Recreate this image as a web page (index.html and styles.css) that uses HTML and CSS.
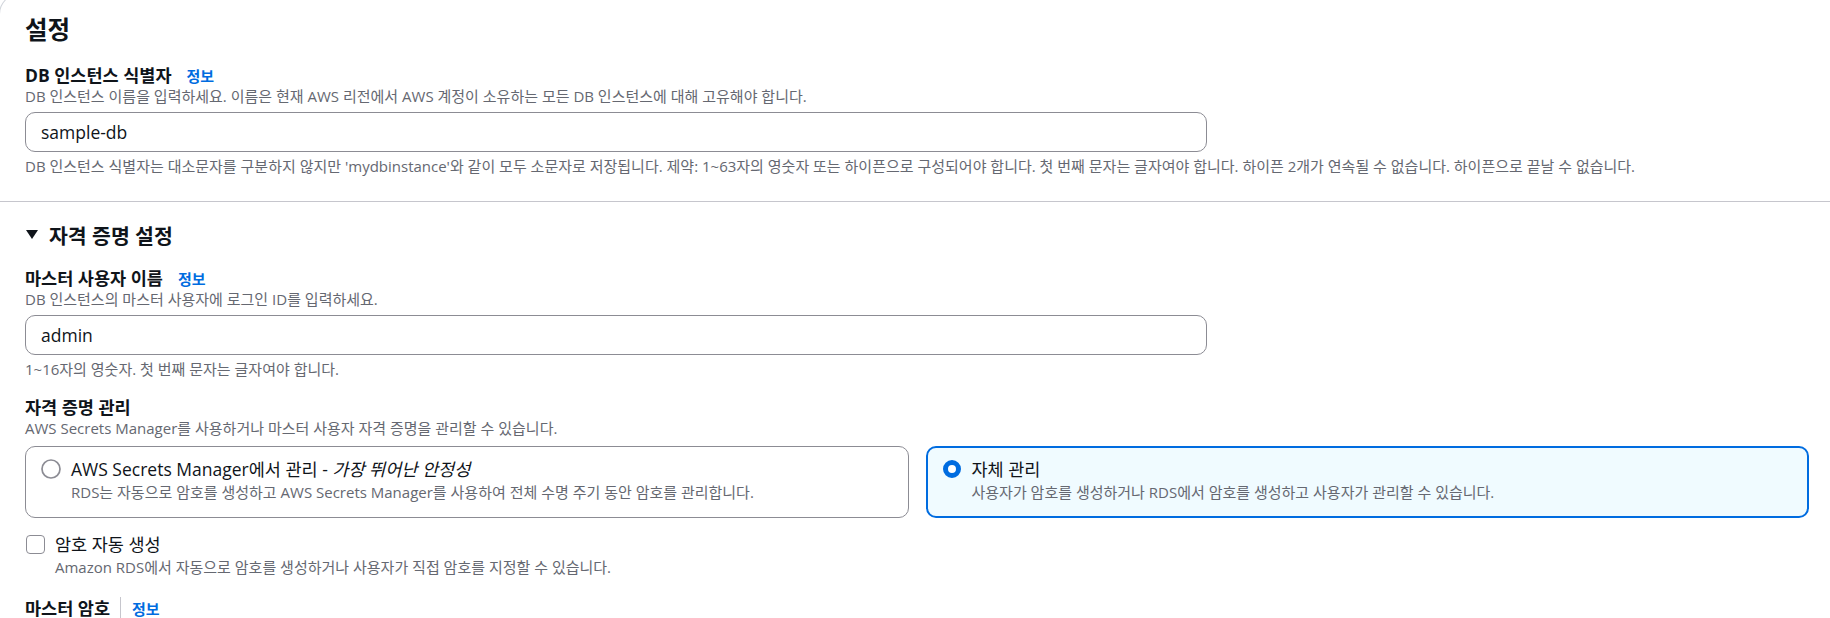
FILE: index.html
```html
<!DOCTYPE html>
<html lang="ko">
<head>
<meta charset="utf-8">
<title>설정</title>
<link rel="stylesheet" href="styles.css">
</head>
<body>
<div class="card">
  <section class="sec sec-top">
    <h2 class="title">설정</h2>
    <div class="field">
      <div class="label-row"><span class="label">DB 인스턴스 식별자</span><a class="info">정보</a></div>
      <div class="desc">DB 인스턴스 이름을 입력하세요. 이름은 현재 AWS 리전에서 AWS 계정이 소유하는 모든 DB 인스턴스에 대해 고유해야 합니다.</div>
      <div class="input">sample-db</div>
      <div class="hint">DB 인스턴스 식별자는 대소문자를 구분하지 않지만 'mydbinstance'와 같이 모두 소문자로 저장됩니다. 제약: 1~63자의 영숫자 또는 하이픈으로 구성되어야 합니다. 첫 번째 문자는 글자여야 합니다. 하이픈 2개가 연속될 수 없습니다. 하이픈으로 끝날 수 없습니다.</div>
    </div>
  </section>
  <section class="sec sec-cred">
    <div class="exp-header">
      <svg class="caret" width="12" height="10" viewBox="0 0 12 10"><polygon points="0,0 12,0 6,9" fill="#0f141a"/></svg>
      <span>자격 증명 설정</span>
    </div>
    <div class="field field-user">
      <div class="label-row"><span class="label">마스터 사용자 이름</span><a class="info">정보</a></div>
      <div class="desc">DB 인스턴스의 마스터 사용자에 로그인 ID를 입력하세요.</div>
      <div class="input">admin</div>
      <div class="hint">1~16자의 영숫자. 첫 번째 문자는 글자여야 합니다.</div>
    </div>
    <div class="field field-manage">
      <div class="label-row"><span class="label">자격 증명 관리</span></div>
      <div class="desc">AWS Secrets Manager를 사용하거나 마스터 사용자 자격 증명을 관리할 수 있습니다.</div>
      <div class="tiles">
        <div class="tile">
          <svg class="radio" width="20" height="20" viewBox="0 0 20 20"><circle cx="10" cy="10" r="9" fill="#fff" stroke="#8c8c94" stroke-width="1.7"/></svg>
          <div class="tile-text">
            <div class="tile-title">AWS Secrets Manager에서 관리 - <em>가장 뛰어난 안정성</em></div>
            <div class="tile-desc">RDS는 자동으로 암호를 생성하고 AWS Secrets Manager를 사용하여 전체 수명 주기 동안 암호를 관리합니다.</div>
          </div>
        </div>
        <div class="tile tile-on">
          <svg class="radio" width="20" height="20" viewBox="0 0 20 20"><circle cx="10" cy="10" r="6.5" fill="#fff" stroke="#006ce0" stroke-width="5"/></svg>
          <div class="tile-text">
            <div class="tile-title">자체 관리</div>
            <div class="tile-desc">사용자가 암호를 생성하거나 RDS에서 암호를 생성하고 사용자가 관리할 수 있습니다.</div>
          </div>
        </div>
      </div>
    </div>
    <div class="check">
      <span class="box"></span>
      <div class="check-text">
        <div class="check-title">암호 자동 생성</div>
        <div class="check-desc">Amazon RDS에서 자동으로 암호를 생성하거나 사용자가 직접 암호를 지정할 수 있습니다.</div>
      </div>
    </div>
    <div class="label-row label-split"><span class="label">마스터 암호</span><span class="split"></span><a class="info">정보</a></div>
  </section>
</div>
</body>
</html>
```
FILE: styles.css
```css
html, body {
  margin: 0;
  padding: 0;
  background: #ffffff;
  overflow: hidden;
}
body {
  font-family: "Open Sans", "Noto Sans CJK KR", sans-serif;
  color: #0f141a;
  width: 1830px;
  height: 618px;
}
.card {
  margin: -6px 0 0 -1px;
  width: 1860px;
  border: 1px solid #d1d5db;
  border-bottom: none;
  border-radius: 20px 20px 0 0;
  background: #fff;
}
.sec {
  padding: 0 25px;
}
.sec-top {
  padding-top: 20px;
  padding-bottom: 25px;
  border-bottom: 1px solid #c6c6cd;
}
.title {
  margin: 0;
  font-size: 24.5px;
  line-height: 30px;
  font-weight: 700;
}
.field {
  margin-top: 19px;
}
.label-row {
  display: flex;
  align-items: center;
  height: 22px;
}
.label {
  font-size: 17.5px;
  line-height: 22px;
  font-weight: 700;
}
.info {
  margin-left: 15px;
  font-size: 15px;
  font-weight: 700;
  color: #006ce0;
}
.desc, .hint, .tile-desc, .check-desc {
  font-size: 15px;
  line-height: 20px;
  color: #656871;
}
.input {
  margin-top: 6px;
  box-sizing: border-box;
  width: 1182px;
  height: 40px;
  border: 1px solid #8c8c94;
  border-radius: 10px;
  padding: 0 15px;
  display: flex;
  align-items: center;
  font-size: 17.5px;
}
.hint {
  margin-top: 4px;
}
.sec-cred {
  padding-top: 19px;
}
.exp-header {
  display: flex;
  align-items: center;
  height: 28px;
  font-size: 20.5px;
  font-weight: 700;
}
.caret {
  margin-left: 1px;
  margin-right: 11px;
}
.field-user {
  margin-top: 18px;
}
.field-manage {
  margin-top: 17px;
}
.tiles {
  margin-top: 8px;
  display: grid;
  grid-template-columns: 1fr 1fr;
  column-gap: 17px;
  width: 1784px;
}
.tile {
  box-sizing: border-box;
  height: 72px;
  border: 1px solid #8c8c94;
  border-radius: 10px;
  padding: 11px 15px 0 15px;
  display: flex;
  gap: 10px;
}
.tile-on {
  border: 2px solid #006ce0;
  background: #f0fbff;
  padding: 10px 14px 0 14px;
}
.radio {
  flex: none;
  margin-top: 1px;
}
.tile-title {
  font-size: 17.5px;
  line-height: 22px;
}
.tile-desc {
  margin-top: 2px;
}
.check {
  margin-top: 15px;
  display: flex;
  gap: 10px;
}
.box {
  flex: none;
  box-sizing: border-box;
  width: 19px;
  height: 19px;
  margin: 2px 0 0 1px;
  border: 1.7px solid #8c8c94;
  border-radius: 4px;
}
.check-title {
  font-size: 17.5px;
  line-height: 22px;
}
.check-desc {
  margin-top: 2px;
}
.label-split {
  margin-top: 20px;
}
.split {
  width: 1px;
  height: 22px;
  background: #c6c6cd;
  margin-left: 10px;
}
.label-split .info {
  margin-left: 11px;
}
```
